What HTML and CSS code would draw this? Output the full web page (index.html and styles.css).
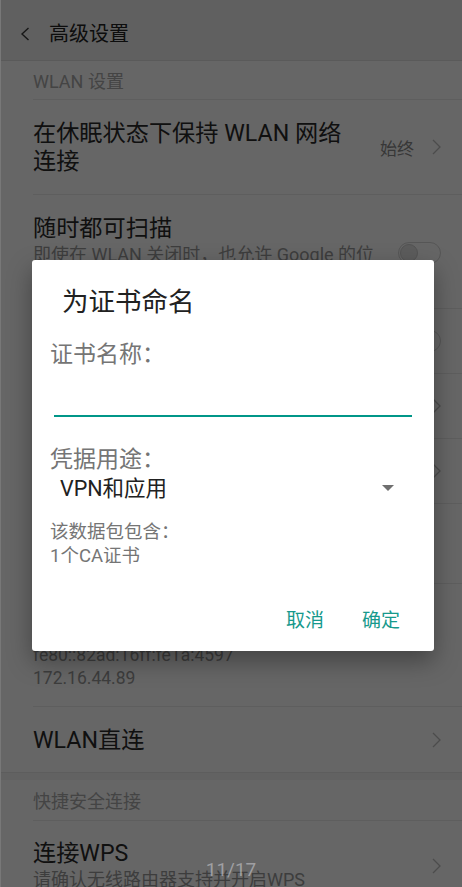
FILE: index.html
```html
<!DOCTYPE html>
<html lang="zh-CN">
<head>
<meta charset="utf-8">
<title>高级设置</title>
<link rel="stylesheet" href="styles.css">
</head>
<body>
<div class="page">
  <header class="appbar">
    <svg class="back" width="10" height="14" viewBox="0 0 10 14"><polyline points="8.5,1 2,7 8.5,13" fill="none" stroke="#3a3a3a" stroke-width="1.4"/></svg>
    <h1>高级设置</h1>
  </header>

  <div class="item section s1"><div class="body"><span class="section-label">WLAN 设置</span></div></div>

  <div class="item r1"><div class="body">
    <div class="main"><div class="title">在休眠状态下保持 WLAN 网络<br>连接</div></div>
    <span class="value">始终</span>
    <svg class="chev" width="9" height="16" viewBox="0 0 9 16"><polyline points="1,1 8,8 1,15" fill="none" stroke="#bdbdbd" stroke-width="1.3"/></svg>
  </div></div>

  <div class="item r2"><div class="body">
    <div class="main">
      <div class="title">随时都可扫描</div>
      <div class="sub">即使在 WLAN 关闭时，也允许 Google 的位<br>置信息服务和其他应用扫描网络</div>
    </div>
    <span class="toggle"><span class="knob"></span></span>
  </div></div>

  <div class="item r3"><div class="body">
    <div class="main"><div class="title">网络通知</div></div>
    <span class="toggle"><span class="knob"></span></span>
  </div></div>

  <div class="item r4"><div class="body">
    <div class="main"><div class="title">已保存的网络</div></div>
    <svg class="chev" width="9" height="16" viewBox="0 0 9 16"><polyline points="1,1 8,8 1,15" fill="none" stroke="#bdbdbd" stroke-width="1.3"/></svg>
  </div></div>

  <div class="item r5"><div class="body">
    <div class="main"><div class="title">安装证书</div></div>
    <svg class="chev" width="9" height="16" viewBox="0 0 9 16"><polyline points="1,1 8,8 1,15" fill="none" stroke="#bdbdbd" stroke-width="1.3"/></svg>
  </div></div>

  <div class="item r6"><div class="body">
    <div class="main">
      <div class="title">MAC 地址</div>
      <div class="addr">80:ad:16:1a:45:97</div>
    </div>
  </div></div>

  <div class="item r7"><div class="body">
    <div class="main">
      <div class="title">IP 地址</div>
      <div class="addr">fe80::82ad:16ff:fe1a:4597</div>
      <div class="addr">fe80::82ad:16ff:fe1a:4597</div>
      <div class="addr">172.16.44.89</div>
    </div>
  </div></div>

  <div class="item r8 last"><div class="body">
    <div class="main"><div class="title">WLAN直连</div></div>
    <svg class="chev" width="9" height="16" viewBox="0 0 9 16"><polyline points="1,1 8,8 1,15" fill="none" stroke="#bdbdbd" stroke-width="1.3"/></svg>
  </div></div>

  <div class="gap"></div>

  <div class="item section s2"><div class="body"><span class="section-label">快捷安全连接</span></div></div>

  <div class="item r9 last"><div class="body">
    <div class="main">
      <div class="title">连接WPS</div>
      <div class="sub">请确认无线路由器支持并开启WPS</div>
    </div>
    <svg class="chev" width="9" height="16" viewBox="0 0 9 16"><polyline points="1,1 8,8 1,15" fill="none" stroke="#bdbdbd" stroke-width="1.3"/></svg>
  </div></div>
</div>

<div class="scrim"></div>

<div class="dialog">
  <h2 class="dlg-title">为证书命名</h2>
  <div class="dlg-body">
    <div class="dlg-label">证书名称：</div>
    <div class="dlg-input"></div>
    <div class="dlg-label l2">凭据用途：</div>
    <div class="spinner">
      <span class="spinner-text">VPN和应用</span>
      <span class="caret"></span>
    </div>
    <div class="dlg-info">
      <div class="info-line">该数据包包含：</div>
      <div class="info-line">1个CA证书</div>
    </div>
  </div>
  <div class="dlg-actions">
    <span class="btn">取消</span>
    <span class="btn">确定</span>
  </div>
</div>

<div class="edge"></div>
<div class="pager">11/17</div>
</body>
</html>
```

FILE: styles.css
```css
* { box-sizing: border-box; margin: 0; padding: 0; }
html, body { width: 462px; height: 887px; overflow: hidden; }
body {
  position: relative;
  background: #fff;
  color: #333;
  font-family: Roboto, "Noto Sans CJK SC", sans-serif;
}

/* ---------- underlying settings page ---------- */
.appbar {
  height: 61px;
  background: #f0f0f0;
  border-bottom: 1px solid #e2e2e2;
  display: flex;
  align-items: center;
  padding: 7px 0 0 20px;
}
.appbar .back { margin-right: 19px; flex: none; }
.appbar h1 { font-size: 20px; font-weight: 400; line-height: 28px; color: #222; }

.item { padding-left: 33px; }
.item .body {
  display: flex;
  align-items: center;
  border-bottom: 1px solid #ececec;
  padding-right: 21px;
}
.item.last .body { border-bottom: none; }
.main { flex: 1; min-width: 0; }

.section-label { font-size: 18px; color: #aaa; }
.s1 .body { height: 39px; }
.s2 .body { height: 41px; }

.title { font-size: 23.2px; line-height: 28px; color: #2a2a2a; }
.sub { font-size: 18px; line-height: 25px; color: #9a9a9a; white-space: nowrap; }
.addr { font-size: 17.5px; line-height: 23px; color: #999; }
.value { font-size: 17px; color: #8a8a8a; margin-right: 18px; }
.chev { flex: none; }

.r1 .body { height: 95px; }
.r2 .body { height: 114px; padding-top: 3px; }
.r3 .body, .r4 .body, .r5 .body { height: 65px; }
.r6 .body { height: 80px; }
.r7 .body { height: 123px; padding-top: 8.5px; align-items: flex-start; }
.r8 .body { height: 65px; }
.r9 .body { height: 89px; }

.toggle {
  flex: none;
  width: 43px;
  height: 22px;
  border: 1px solid #d6d6d6;
  border-radius: 11px;
  background: #fff;
  display: flex;
  align-items: center;
  padding-left: 1px;
}
.knob {
  width: 18px;
  height: 18px;
  border-radius: 50%;
  background: #e6e6e6;
  border: 1px solid #cfcfcf;
}

.gap {
  height: 8px;
  background: #f6f6f6;
  border-top: 1px solid #e8e8e8;
}

/* ---------- dialog overlay ---------- */
.scrim {
  position: absolute;
  inset: 0;
  background: rgba(0, 0, 0, 0.6);
}
.dialog {
  position: absolute;
  left: 32px;
  top: 260px;
  width: 402px;
  height: 391px;
  background: #fff;
  border-radius: 3px;
  box-shadow: 0 10px 24px rgba(0, 0, 0, 0.35);
}
.dlg-title {
  margin-top: 26px;
  padding-left: 30px;
  font-size: 26.5px;
  line-height: 32px;
  font-weight: 400;
  color: #212121;
}
.dlg-body { padding: 0 22px 0 18px; }
.dlg-label {
  margin-top: 23px;
  font-size: 23px;
  line-height: 28px;
  color: #757575;
}
.dlg-label.l2 { margin-top: 29px; }
.dlg-input {
  margin-left: 4px;
  height: 48px;
  border-bottom: 2px solid #009688;
}
.spinner {
  display: flex;
  align-items: center;
  justify-content: space-between;
  height: 30px;
  padding: 0 18px 0 10px;
}
.spinner-text { font-size: 21.5px; line-height: 30px; color: #212121; }
.caret {
  width: 0;
  height: 0;
  border-left: 6px solid transparent;
  border-right: 6px solid transparent;
  border-top: 6px solid #6f6f6f;
  margin-top: -2px;
}
.dlg-info {
  margin-top: 16px;
  color: #757575;
}
.info-line { font-size: 18.5px; line-height: 24px; }
.dlg-actions {
  display: flex;
  justify-content: flex-end;
  gap: 38px;
  margin-top: 41px;
  padding-right: 34px;
}
.btn { font-size: 19px; line-height: 24px; color: #16998c; }

.edge {
  position: absolute;
  left: 0;
  top: 0;
  bottom: 0;
  width: 1px;
  background: #787878;
}
.pager {
  position: absolute;
  left: 0;
  right: 0;
  top: 857px;
  text-align: center;
  font-size: 19px;
  line-height: 26px;
  color: rgba(185, 185, 190, 0.7);
}
```
